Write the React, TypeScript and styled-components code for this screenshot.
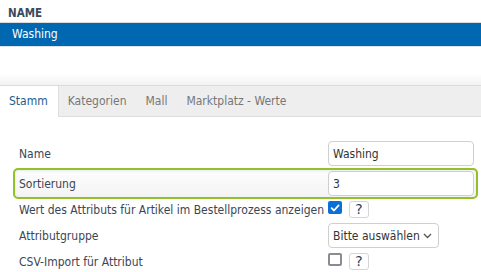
import { styled, createGlobalStyle } from 'styled-components'

const GlobalStyle = createGlobalStyle`
	body {
		margin: 0;
		background: #fff;
		font-family: "DejaVu Sans Condensed", "DejaVu Sans", Verdana, sans-serif;
		font-size: 12px;
		color: #3a4656;
	}
`

const tabs = ['Stamm', 'Kategorien', 'Mall', 'Marktplatz - Werte']

const HelpButton = () => <Help type="button">?</Help>

const CheckBox = ({ checked }: { checked: boolean }) =>
	<Check checked={checked}>
		{checked &&
			<svg width="10" height="10" viewBox="0 0 10 10">
				<path d="M1.6 5.2 L4 7.5 L8.6 2.4" fill="none" stroke="#fff" strokeWidth="1.8" strokeLinecap="round" strokeLinejoin="round"/>
			</svg>}
	</Check>

export default function App() {
	return <Page>
		<GlobalStyle/>

		<ListHeader>NAME</ListHeader>
		<ListRow>Washing</ListRow>
		<Spacer/>

		<TabBar>
			{tabs.map((t, i) => <Tab key={t} active={i === 0}>{t}</Tab>)}
			<TabFill/>
		</TabBar>

		<Form>
			<Row>
				<Label>Name</Label>
				<Input defaultValue="Washing"/>
			</Row>
			<Row focused>
				<Label>Sortierung</Label>
				<Input defaultValue="3"/>
			</Row>
			<Row>
				<Label>Wert des Attributs für Artikel im Bestellprozess anzeigen</Label>
				<Controls>
					<CheckBox checked/>
					<HelpButton/>
				</Controls>
			</Row>
			<Row>
				<Label>Attributgruppe</Label>
				<Select>
					<span>Bitte auswählen</span>
					<svg width="9" height="6" viewBox="0 0 9 6">
						<path d="M1 1 L4.5 4.5 L8 1" fill="none" stroke="#555" strokeWidth="1.3"/>
					</svg>
				</Select>
			</Row>
			<Row>
				<Label>CSV-Import für Attribut</Label>
				<Controls>
					<CheckBox checked={false}/>
					<HelpButton/>
				</Controls>
			</Row>
		</Form>
	</Page>
}

const Page = styled.div`
	width: 481px;
	height: 272px;
	overflow: hidden;
`

const ListHeader = styled.div`
	height: 23px;
	padding: 6px 0 0 8px;
	box-sizing: border-box;
	font-weight: bold;
	font-size: 11.5px;
	color: #3b4a5c;
	border-bottom: 1px solid #dcdcdc;
`

const ListRow = styled.div`
	height: 23px;
	line-height: 23px;
	padding-left: 12px;
	background: #0068b1;
	color: #fff;
	border-bottom: 1px solid #dde3ea;
`

const Spacer = styled.div`
	height: 38px;
	background: linear-gradient(to bottom, #fff 70%, #f2f2f2 100%);
`

const TabBar = styled.div`
	display: flex;
	height: 31px;
	border-top: 1px solid #dcdcdc;
`

const Tab = styled.div<{ active: boolean }>`
	padding: 0 10px 0 9px;
	display: flex;
	align-items: center;
	background: ${p => p.active ? '#fff' : '#eeeeee'};
	color: ${p => p.active ? '#1d5d8e' : '#777'};
	border-bottom: 1px solid ${p => p.active ? '#fff' : '#dedede'};
	& + & { border-left: none; }
	&:nth-child(2) { border-left: 1px solid #dedede; }
`

const TabFill = styled.div`
	flex: 1;
	background: #eeeeee;
	border-bottom: 1px solid #dedede;
`

const Form = styled.div`
	padding: 21px 3px 0 13px;
`

const Row = styled.div<{ focused?: boolean }>`
	display: grid;
	grid-template-columns: 309px 1fr;
	align-items: center;
	padding: 1px 4px;
	border: 2px solid ${p => p.focused ? '#92c12a' : 'transparent'};
	border-radius: 5px;
	background: ${p => p.focused ? 'linear-gradient(to bottom, #fdfdfd, #f4f4f4)' : 'transparent'};
	box-shadow: ${p => p.focused ? 'inset 0 1px 3px rgba(0,0,0,0.08)' : 'none'};
	margin-top: -1px;
	&:first-child { margin-top: 0; }
`

const Label = styled.div`
	white-space: nowrap;
	color: #3a4656;
`

const Input = styled.input`
	width: 146px;
	height: 25px;
	box-sizing: border-box;
	border: 1px solid #cfcfcf;
	border-radius: 4px;
	padding: 0 4px;
	font-family: inherit;
	font-size: 12px;
	color: #333;
	background: #fff;
	outline: none;
`

const Controls = styled.div`
	display: flex;
	align-items: flex-start;
	gap: 7px;
	height: 17px;
`

const Check = styled.div<{ checked: boolean }>`
	width: 14px;
	height: 13px;
	box-sizing: border-box;
	border-radius: 2px;
	display: flex;
	align-items: center;
	justify-content: center;
	background: ${p => p.checked ? '#0a6fd6' : '#fff'};
	border: ${p => p.checked ? 'none' : '2px solid #8a8a94'};
`

const Help = styled.button`
	width: 20px;
	height: 17px;
	padding: 0;
	box-sizing: border-box;
	border: 1px solid #d4d4d4;
	border-radius: 3px;
	background: #fff;
	color: #2b4560;
	font-family: "DejaVu Sans", sans-serif;
	font-size: 14px;
	line-height: 15px;
`

const Select = styled.div`
	width: 111px;
	height: 25px;
	box-sizing: border-box;
	border: 1px solid #cfcfcf;
	border-radius: 4px;
	display: flex;
	align-items: center;
	justify-content: space-between;
	padding: 0 6px 0 4px;
	white-space: nowrap;
	color: #333;
`
